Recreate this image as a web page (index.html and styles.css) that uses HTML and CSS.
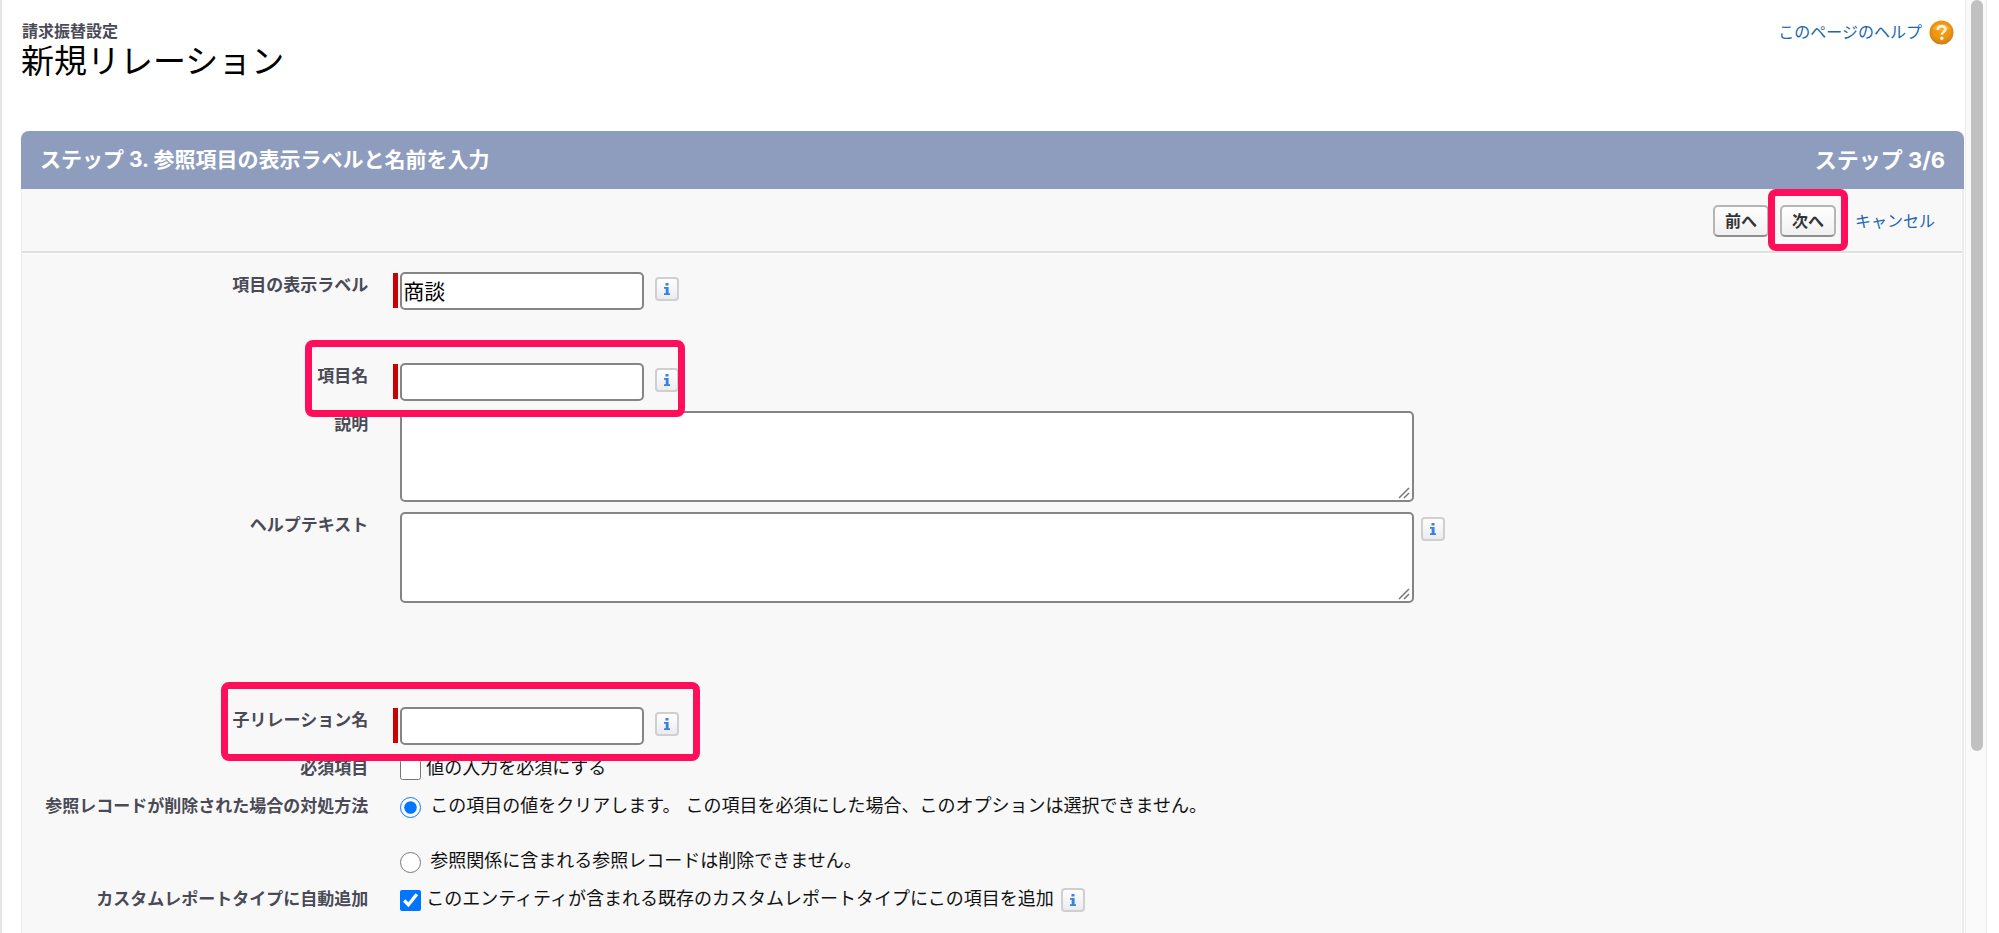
FILE: index.html
```html
<!doctype html>
<html lang="ja">
<head>
    <meta charset="UTF-8" />
    <title>新規リレーション</title>
    <link rel="stylesheet" href="styles.css">
</head>
<body>
<svg class="defs" width="0" height="0" aria-hidden="true">
    <defs>
        <linearGradient id="tile" x1="0" y1="0" x2="0" y2="1">
            <stop offset="0" stop-color="#fff" />
            <stop offset="1" stop-color="#e9ebf0" />
        </linearGradient>
        <radialGradient id="orange" cx="0.5" cy="0.4" r="0.6">
            <stop offset="0" stop-color="#f79a0c" />
            <stop offset="0.6" stop-color="#ee960f" />
            <stop offset="1" stop-color="#c87d1c" />
        </radialGradient>
        <symbol id="info" viewBox="0 0 24 24">
            <rect x="1" y="1" width="22" height="22" rx="3" fill="url(#tile)" stroke="#cfcfcf" stroke-width="2" />
            <path d="M10.5 6h3v2.4h-3zM9 10h4.6v6.2H15V18H9v-1.8h1.7v-4.4H9z" fill="#3b82d9" />
        </symbol>
    </defs>
</svg>
<main class="page">
    <header class="page-header">
        <h1><span class="page-type">請求振替設定</span><span class="page-title">新規リレーション</span></h1>
        <a class="help" href="#">このページのヘルプ
            <svg width="25" height="25" viewBox="0 0 25 25" aria-hidden="true">
                <circle cx="12.5" cy="12.5" r="12" fill="url(#orange)" />
                <path d="M4 9a9 7 0 0 1 17 0a14 8 0 0 1-17 0z" fill="#fbbd5c" opacity="0.6" />
                <path d="M8.8 9.8c0-4.8 7.6-4.6 7.6-.6 0 2.6-3.6 2.9-3.6 5.6" fill="none" stroke="#fff3df" stroke-width="2.6" />
                <circle cx="12.8" cy="18.3" r="1.7" fill="#fff3df" />
            </svg>
        </a>
    </header>
    <form class="panel">
        <div class="panel-title">
            <h2>ステップ 3. 参照項目の表示ラベルと名前を入力</h2>
            <span class="step">ステップ 3/6</span>
        </div>
        <div class="buttons">
            <button type="button">前へ</button>
            <span class="marked mark-next"><button type="button">次へ</button></span>
            <a href="#">キャンセル</a>
        </div>
        <div class="fields">
            <div class="row row-label">
                <label class="name" for="label">項目の表示ラベル</label>
                <div class="field required">
                    <input class="text" type="text" id="label" value="商談" />
                    <svg class="info"><use href="#info" /></svg>
                </div>
            </div>
            <div class="row marked mark-name">
                <label class="name" for="name">項目名</label>
                <div class="field required">
                    <input class="text" type="text" id="name" />
                    <svg class="info"><use href="#info" /></svg>
                </div>
            </div>
            <div class="row">
                <label class="name" for="description">説明</label>
                <div class="field"><textarea id="description"></textarea></div>
            </div>
            <div class="row row-help">
                <label class="name" for="helptext">ヘルプテキスト</label>
                <div class="field">
                    <textarea id="helptext"></textarea>
                    <svg class="info"><use href="#info" /></svg>
                </div>
            </div>
            <div class="row marked mark-child">
                <label class="name" for="child">子リレーション名</label>
                <div class="field required">
                    <input class="text" type="text" id="child" />
                    <svg class="info"><use href="#info" /></svg>
                </div>
            </div>
            <div class="row">
                <span class="name">必須項目</span>
                <div class="field">
                    <label class="option"><input type="checkbox" /><span>値の入力を必須にする</span></label>
                </div>
            </div>
            <div class="row">
                <span class="name">参照レコードが削除された場合の対処方法</span>
                <div class="field radios">
                    <label class="option"><input type="radio" name="ondelete" checked /><span>この項目の値をクリアします。 この項目を必須にした場合、このオプションは選択できません。</span></label>
                    <label class="option"><input type="radio" name="ondelete" /><span>参照関係に含まれる参照レコードは削除できません。</span></label>
                </div>
            </div>
            <div class="row">
                <span class="name">カスタムレポートタイプに自動追加</span>
                <div class="field">
                    <label class="option"><input type="checkbox" checked /><span>このエンティティが含まれる既存のカスタムレポートタイプにこの項目を追加</span></label>
                    <svg class="info"><use href="#info" /></svg>
                </div>
            </div>
        </div>
    </form>
</main>
<div class="scrollbar"><div class="thumb"></div></div>
</body>
</html>
```

FILE: styles.css
```css
*,*::before,*::after {
    box-sizing: border-box;
}
html,body {
    height: 100%;
    margin: 0;
}
body {
    background: white;
    border-left: 2px solid #e6e6e6;
    color: #111;
    display: flex;
    font-family: Inter, "Noto Sans CJK JP", sans-serif;
    font-size: 18px;
    overflow: hidden;
    padding-right: 12px;
}
a {
    color: #1b66ad;
    font-size: 16px;
    text-decoration: none;
}
h1,h2 {
    margin: 0;
}
.defs {
    position: absolute;
}
.page {
    display: flex;
    flex: 1;
    flex-direction: column;
    min-width: 0;
    padding-left: 19px;
}
.page-header {
    align-items: flex-start;
    display: flex;
    justify-content: space-between;
    padding: 20px 10px 50px 0;
}
.page-type,.page-title {
    display: block;
}
.page-type {
    color: #4a4a56;
    font-size: 16px;
    line-height: 22px;
    padding-left: 1px;
}
.page-title {
    color: black;
    font-size: 33px;
    font-weight: 400;
    line-height: 39px;
}
.help {
    align-items: center;
    display: flex;
    gap: 7px;
    line-height: 25px;
}
.panel {
    background: #f8f8f8;
    border: solid #ebebeb;
    border-width: 0 2px 0 1px;
    border-radius: 8px 8px 0 0;
    flex: 1;
}
.panel-title {
    align-items: center;
    background: #8e9dbe;
    border-radius: 8px 8px 0 0;
    color: white;
    display: flex;
    font-weight: 700;
    justify-content: space-between;
    line-height: 58px;
    margin: 0 -2px 0 -1px;
    padding: 0 19px;
}
.panel-title h2 {
    font-size: 21px;
}
.step {
    font-size: 22px;
}
.buttons {
    align-items: center;
    border-bottom: 2px solid #e0e0e0;
    display: flex;
    gap: 11px;
    justify-content: flex-end;
    line-height: 24px;
    padding: 16px 27px 14px;
}
.buttons a {
    margin-left: 8px;
}
button {
    background: linear-gradient(white, #f0f0f0);
    border: 2px solid #b5b5b5;
    border-bottom-color: #8f8f8f;
    border-radius: 5px;
    color: #333;
    display: block;
    font-family: inherit;
    font-size: 16px;
    font-weight: 700;
    height: 32px;
    line-height: 24px;
    padding: 0 10px;
}
.fields {
    border-top: 1px solid white;
    display: flex;
    flex-direction: column;
    gap: 10px;
    padding-top: 18px;
}
.row {
    display: grid;
    grid-template-columns: 18% 1fr;
}
.row-label {
    padding-bottom: 43px;
}
.row-help {
    padding-bottom: 94px;
}
.name {
    color: #4a4a56;
    font-size: 17px;
    font-weight: 700;
    line-height: 26px;
    padding-right: 3px;
    text-align: right;
    white-space: nowrap;
}
.field {
    align-items: flex-start;
    display: flex;
    padding-left: 22px;
}
.field::before {
    content: "";
    height: 35px;
    margin: 1px 2px -8px 0;
    width: 5px;
}
.required::before {
    background: #c00;
    margin-bottom: 0;
}
.text,textarea {
    background: white;
    border: 2px solid #858585;
    border-radius: 5px;
    color: black;
    font-family: inherit;
    font-size: 21px;
    margin: 0;
    padding: 0 1px 2px;
}
.text {
    height: 38px;
    width: 244px;
}
textarea {
    background: white url("data:image/svg+xml,%3Csvg xmlns='http://www.w3.org/2000/svg' width='14' height='14'%3E%3Cpath d='M1 12L11 2M6 12L11 7' stroke='%23777' stroke-width='1.5'/%3E%3C/svg%3E") no-repeat right bottom;
    height: 91px;
    resize: none;
    width: 64.6%;
}
.info {
    flex: none;
    height: 24px;
    margin: 5px 0 0 7px;
    width: 24px;
}
.text + .info {
    margin-left: 11px;
}
.option {
    align-items: center;
    display: flex;
    gap: 5px;
    line-height: 28px;
}
.option input {
    accent-color: #0075ff;
    height: 21px;
    margin: 0;
    width: 21px;
}
.option span {
    line-height: 26px;
    padding-bottom: 2px;
}
.option + .info {
    margin-top: 2px;
}
.radios {
    display: grid;
    grid-template-columns: auto 1fr;
    row-gap: 27px;
}
.radios::before {
    grid-row: 1 / 3;
}
.radios .option {
    gap: 9px;
    grid-column: 2;
}
/* red frames drawn over the controls to point at */
.marked {
    position: relative;
}
.marked::after {
    border: 7px solid #ff0f5b;
    border-radius: 8px;
    content: "";
    pointer-events: none;
    position: absolute;
    z-index: 1;
}
.mark-next::after {
    inset: -16px -12px -14px;
}
.mark-name::after {
    height: 77px;
    left: calc(18% - 66px);
    top: -23px;
    width: 380px;
}
.mark-child::after {
    height: 79px;
    left: calc(18% - 150px);
    top: -25px;
    width: 479px;
}
.scrollbar {
    background: #fafafa;
    border: solid #ececec;
    border-width: 0 1px;
    margin-left: 1px;
    padding: 0 3px 0 5px;
    width: 22px;
}
.thumb {
    background: #c1c1c1;
    border-radius: 7px;
    height: 80.5%;
}
```
